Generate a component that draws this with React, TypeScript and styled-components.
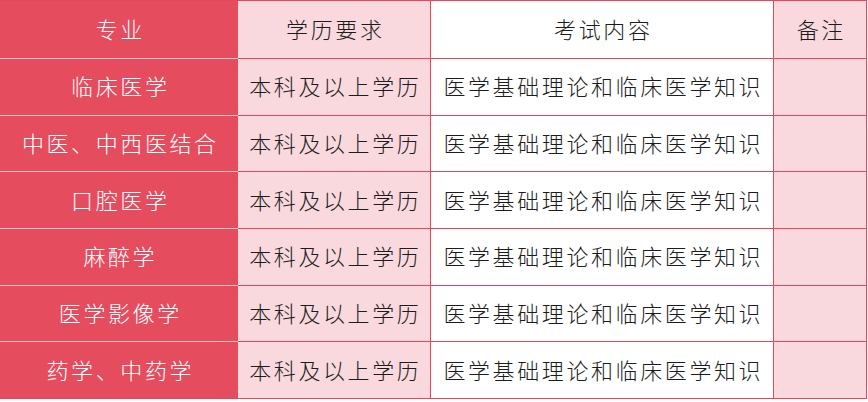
import React from "react";
import styled, { createGlobalStyle, css } from "styled-components";

const GlobalStyle = createGlobalStyle`
  html, body { margin: 0; padding: 0; background: #ffffff; }
  body { font-family: "Noto Sans CJK SC", "Noto Sans", sans-serif; }
`;

const RED = "#e54d5f";
const PINK = "#f9d9de";
const LINE = "#e8475a";

type Tone = "red" | "pink" | "white";

const Grid = styled.div`
  display: grid;
  grid-template-columns: 238px 193px 343px 93px;
  grid-template-rows: 58px repeat(6, 56.667px);
  width: 867px;
  border-top: 1px solid ${LINE};
`;

const Cell = styled.div<{ $tone: Tone; $bottom?: boolean }>`
  box-sizing: border-box;
  display: flex;
  align-items: center;
  justify-content: center;
  font-size: 22px;
  font-weight: 300;
  letter-spacing: 2.6px;
  text-indent: 2.6px;
  white-space: nowrap;
  padding-bottom: 3px;
  ${({ $tone, $bottom }) =>
    $tone === "red"
      ? css`
          background: ${RED};
          color: #ffffff;
          border-bottom: 1px solid ${$bottom ? LINE : "#f7c3ca"};
        `
      : css`
          background: ${$tone === "pink" ? PINK : "#ffffff"};
          color: #1c1c1c;
          border-bottom: 1px solid ${LINE};
          border-right: 1px solid ${LINE};
        `}
`;

const header = ["专业", "学历要求", "考试内容", "备注"];
const majors = [
  "临床医学",
  "中医、中西医结合",
  "口腔医学",
  "麻醉学",
  "医学影像学",
  "药学、中药学",
];

export default function App() {
  return (
    <>
      <GlobalStyle />
      <Grid>
        <Cell $tone="red">{header[0]}</Cell>
        <Cell $tone="pink">{header[1]}</Cell>
        <Cell $tone="white">{header[2]}</Cell>
        <Cell $tone="pink">{header[3]}</Cell>
        {majors.map((m, i) => {
          const bottom = i === majors.length - 1;
          return (
            <React.Fragment key={m}>
              <Cell $tone="red" $bottom={bottom}>{m}</Cell>
              <Cell $tone="pink">本科及以上学历</Cell>
              <Cell $tone="white">医学基础理论和临床医学知识</Cell>
              <Cell $tone="pink"></Cell>
            </React.Fragment>
          );
        })}
      </Grid>
    </>
  );
}
